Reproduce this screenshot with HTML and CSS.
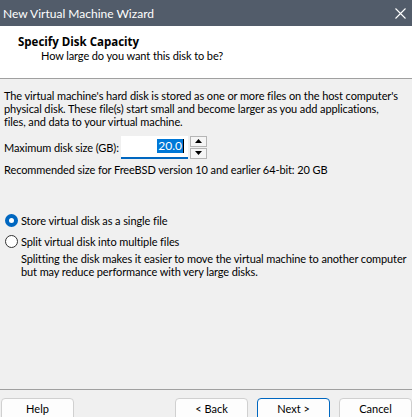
FILE: index.html
```html
<!DOCTYPE html>
<html>
<head>
<meta charset="utf-8">
<link rel="stylesheet" href="styles.css">
</head>
<body>
<div class="window">
  <div class="titlebar">
    <span class="title">New Virtual Machine Wizard</span>
    <svg class="close" width="11" height="11" viewBox="0 0 11 11"><path d="M0.5 0.5 L10.5 10.5 M10.5 0.5 L0.5 10.5" stroke="#fff" stroke-width="1.1"/></svg>
  </div>
  <div class="header">
    <div class="h-title">Specify Disk Capacity</div>
    <div class="h-sub">How large do you want this disk to be?</div>
  </div>
  <div class="content">
    <p class="para">The virtual machine's hard disk is stored as one or more files on the host computer's<br>physical disk. These file(s) start small and become larger as you add applications,<br>files, and data to your virtual machine.</p>
    <div class="size-row">
      <span class="label">Maximum disk size (GB):</span>
      <div class="spin">
        <div class="input"><span class="sel">20.0</span><span class="caret"></span></div>
        <div class="spin-btns">
          <div class="sbtn"><svg width="7" height="4" viewBox="0 0 7 4"><path d="M3.5 0 L7 4 L0 4 Z" fill="#000"/></svg></div>
          <div class="sbtn"><svg width="7" height="4" viewBox="0 0 7 4"><path d="M0 0 L7 0 L3.5 4 Z" fill="#000"/></svg></div>
        </div>
      </div>
    </div>
    <p class="rec">Recommended size for FreeBSD version 10 and earlier 64-bit: 20 GB</p>
    <div class="radios">
      <label class="radio"><span class="dot on"></span>Store virtual disk as a single file</label>
      <label class="radio"><span class="dot"></span>Split virtual disk into multiple files</label>
      <p class="desc">Splitting the disk makes it easier to move the virtual machine to another computer<br>but may reduce performance with very large disks.</p>
    </div>
  </div>
  <div class="footer">
    <button class="btn">Help</button>
    <div class="right">
      <button class="btn">&lt; Back</button>
      <button class="btn primary">Next &gt;</button>
      <button class="btn">Cancel</button>
    </div>
  </div>
</div>
</body>
</html>
```
FILE: styles.css
```css
* { box-sizing: border-box; }
html, body { margin: 0; padding: 0; }
body {
  width: 412px;
  height: 417px;
  overflow: hidden;
  background: #f0f0f0;
  font-family: "Lato", "Liberation Sans", Arial, sans-serif;
  font-size: 11px;
  letter-spacing: -0.1px;
  color: #000;
}
.window { display: flex; flex-direction: column; height: 417px; }
.titlebar {
  height: 26px;
  background: #525c6a;
  color: #fff;
  display: flex;
  align-items: center;
  justify-content: space-between;
  padding: 0 6px 0 3px;
  flex-shrink: 0;
}
.title { font-size: 12px; letter-spacing: 0; }
.header {
  height: 53px;
  background: #fff;
  border-bottom: 1px solid #a0a0a0;
  padding: 9px 0 0 18px;
  flex-shrink: 0;
}
.h-title { font-family: "Open Sans", "Liberation Sans", sans-serif; font-weight: 700; font-size: 11.5px; line-height: 14px; letter-spacing: 0; }
.h-sub { padding-left: 23px; line-height: 14px; margin-top: 0; }
.content { padding: 10px 4px 0 4px; flex: 1; }
.para { margin: 0; line-height: 13px; white-space: nowrap; }
.size-row { display: flex; align-items: center; margin-top: 7px; height: 24px; }
.label { width: 117px; white-space: nowrap; }
.spin { display: flex; height: 23px; }
.input {
  width: 67px;
  background: #fff;
  border-bottom: 2px solid #0067c0;
  display: flex;
  justify-content: flex-end;
  align-items: center;
  padding-right: 4px;
}
.sel { background: #0078d7; color: #fff; line-height: 14px; padding: 0 1px; font-size: 12px; letter-spacing: 0; }
.caret { width: 1px; height: 14px; background: #000; }
.spin-btns { display: flex; flex-direction: column; gap: 1px; margin-left: 2px; }
.sbtn {
  width: 17px;
  height: 11px;
  background: #f5f5f5;
  border: 1px solid #b5b5b5;
  display: flex;
  align-items: center;
  justify-content: center;
}
.rec { margin: 4px 0 0 0; line-height: 13px; white-space: nowrap; }
.radios { margin-top: 34px; }
.radio { display: flex; align-items: center; height: 21px; }
.dot {
  width: 13px; height: 13px;
  border: 1px solid #333;
  border-radius: 50%;
  background: #fff;
  margin: 0 3px 0 1px;
}
.dot.on { border: 4px solid #0067c0; background: #fff; }
.desc { margin: 0 0 0 17px; line-height: 13px; white-space: nowrap; }
.footer {
  border-top: 1px solid #a0a0a0;
  height: 28px;
  display: flex;
  justify-content: space-between;
  padding: 8px 0 0 1px;
  flex-shrink: 0;
}
.right { display: flex; gap: 9px; }
.btn {
  width: 73px;
  height: 24px;
  background: #fdfdfd;
  border: 1px solid #d0d0d0;
  border-radius: 4px;
  font-family: inherit;
  font-size: 11px;
  letter-spacing: 0;
  color: #000;
  padding: 0 0 4px 0;
}
.btn.primary { border-color: #0067c0; }
```
